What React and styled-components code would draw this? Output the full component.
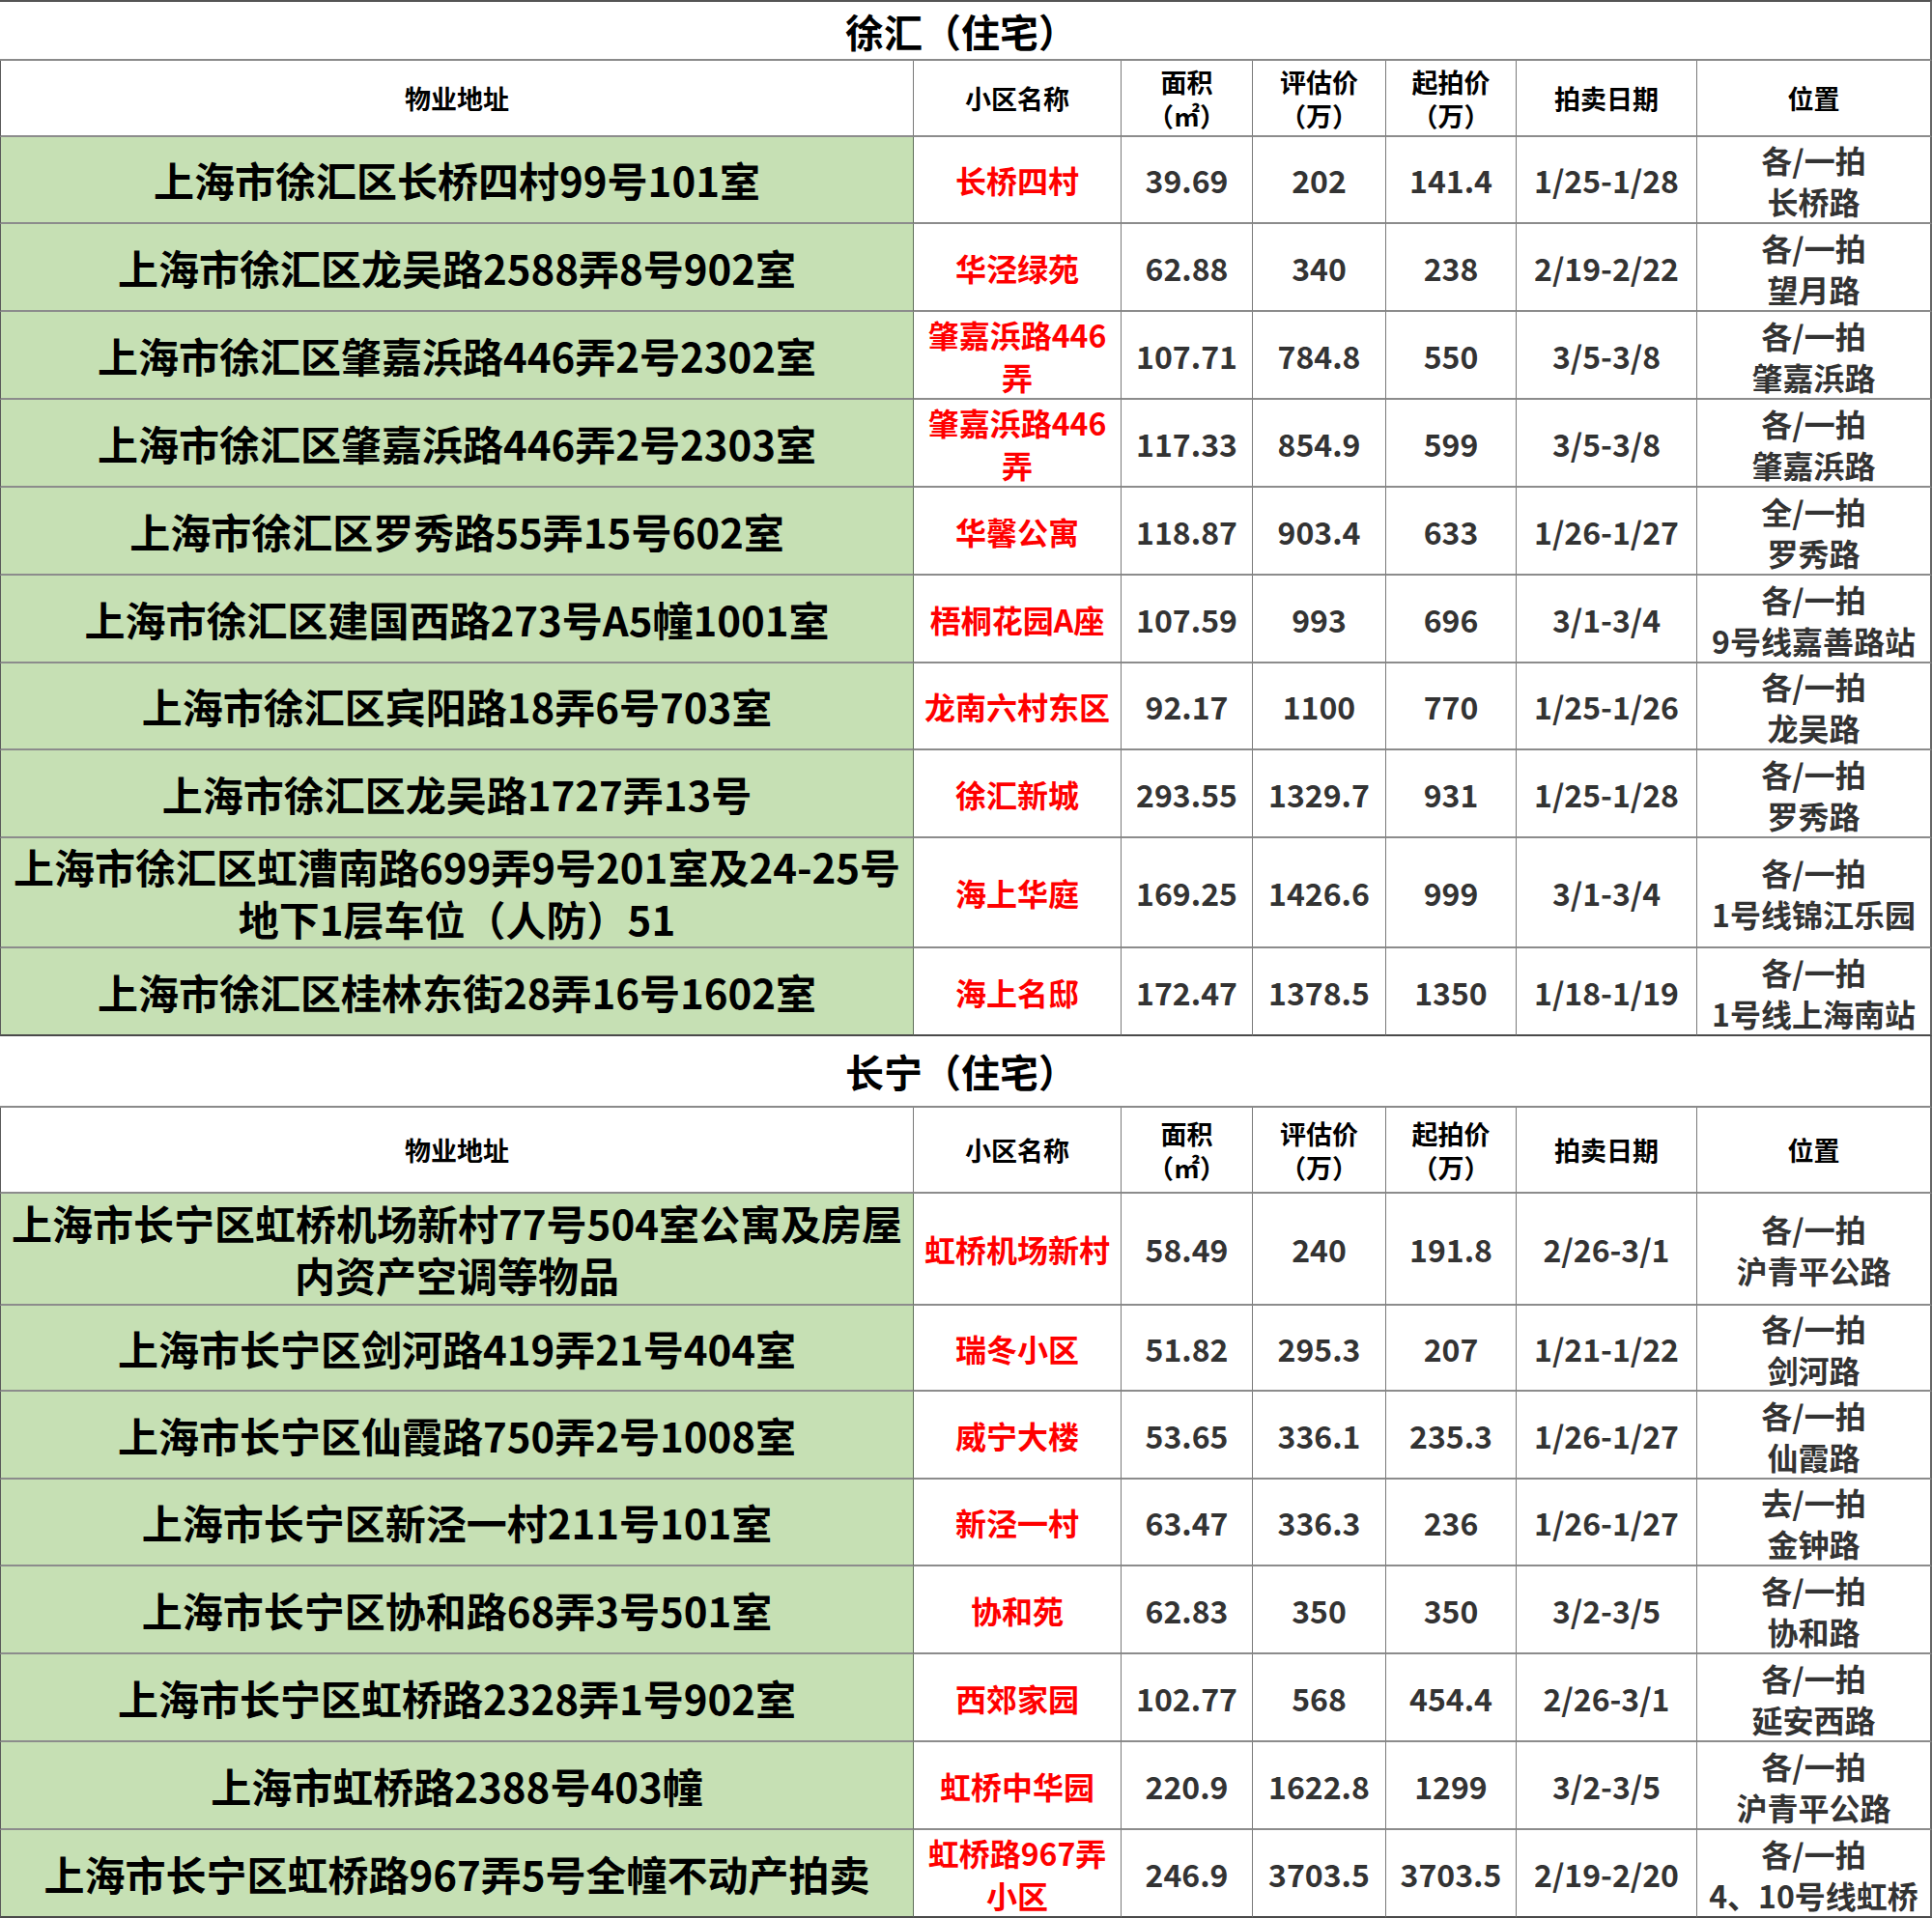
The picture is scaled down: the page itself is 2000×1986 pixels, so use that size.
import React from 'react';
import styled, { createGlobalStyle } from 'styled-components';

const GlobalStyle = createGlobalStyle`
  html, body { margin: 0; padding: 0; background: #ffffff; }
  body { font-family: "Noto Sans CJK SC", "Noto Sans", sans-serif; }
  * { box-sizing: border-box; }
`;

const COLS = '946px 215px 136px 138px 135px 187px 243px';

const Page = styled.div`
  width: 2000px;
  display: flex;
  flex-direction: column;
`;

const Section = styled.section`
  display: flex;
  flex-direction: column;
`;

const TitleBar = styled.div`
  height: ${(p) => p.$h}px;
  display: flex;
  align-items: center;
  justify-content: center;
  font-size: 40px;
  line-height: 48px;
  font-weight: 700;
  color: #000;
  background: #fff;
  border-top: ${(p) => (p.$top ? '2px solid #555' : 'none')};
  border-right: 2px solid #666;
  border-bottom: 2px solid #8a8a8a;
  padding-right: 8px;
`;

const Row = styled.div`
  display: grid;
  grid-template-columns: ${COLS};
  height: ${(p) => p.$h}px;
`;

const Cell = styled.div`
  display: flex;
  flex-direction: column;
  align-items: center;
  justify-content: center;
  text-align: center;
  white-space: nowrap;
  overflow: hidden;
  font-weight: 700;
  background: #fff;
  border-right: 1px solid #7a7a7a;
  border-bottom: 2px solid ${(p) => (p.$last ? '#4a4a4a' : '#8c8c8c')};
  &:first-child { border-left: 1px solid #5a5a5a; }
  &:last-child { border-right: 2px solid #666; }
`;

const HeaderCell = styled(Cell)`
  font-size: 27px;
  line-height: 35px;
  color: #000;
`;

const AddressCell = styled(Cell)`
  background: #c6e0b4;
  font-size: 42px;
  line-height: 54px;
  color: #000;
  border-right: 1px solid #5f6e5a;
`;

const NameCell = styled(Cell)`
  font-size: 32px;
  line-height: 44px;
  color: #ff0000;
`;

const NumCell = styled(Cell)`
  font-size: 32px;
  color: #333;
`;

const PosCell = styled(Cell)`
  font-size: 32px;
  line-height: 43px;
  color: #333;
  padding-top: 2px;
`;

const Line = styled.span`
  display: block;
`;

const Lines = ({ text }) =>
  text.split('|').map((t, i) => <Line key={i}>{t}</Line>);

const sections = [
  {
    title: '徐汇（住宅）',
    titleH: 63,
    headerH: 79,
    top: true,
    rows: [
      ['上海市徐汇区长桥四村99号101室', '长桥四村', '39.69', '202', '141.4', '1/25-1/28', '各/一拍|长桥路', 90],
      ['上海市徐汇区龙吴路2588弄8号902室', '华泾绿苑', '62.88', '340', '238', '2/19-2/22', '各/一拍|望月路', 91],
      ['上海市徐汇区肇嘉浜路446弄2号2302室', '肇嘉浜路446|弄', '107.71', '784.8', '550', '3/5-3/8', '各/一拍|肇嘉浜路', 91],
      ['上海市徐汇区肇嘉浜路446弄2号2303室', '肇嘉浜路446|弄', '117.33', '854.9', '599', '3/5-3/8', '各/一拍|肇嘉浜路', 91],
      ['上海市徐汇区罗秀路55弄15号602室', '华馨公寓', '118.87', '903.4', '633', '1/26-1/27', '全/一拍|罗秀路', 91],
      ['上海市徐汇区建国西路273号A5幢1001室', '梧桐花园A座', '107.59', '993', '696', '3/1-3/4', '各/一拍|9号线嘉善路站', 91],
      ['上海市徐汇区宾阳路18弄6号703室', '龙南六村东区', '92.17', '1100', '770', '1/25-1/26', '各/一拍|龙吴路', 90],
      ['上海市徐汇区龙吴路1727弄13号', '徐汇新城', '293.55', '1329.7', '931', '1/25-1/28', '各/一拍|罗秀路', 91],
      ['上海市徐汇区虹漕南路699弄9号201室及24-25号|地下1层车位（人防）51', '海上华庭', '169.25', '1426.6', '999', '3/1-3/4', '各/一拍|1号线锦江乐园', 114],
      ['上海市徐汇区桂林东街28弄16号1602室', '海上名邸', '172.47', '1378.5', '1350', '1/18-1/19', '各/一拍|1号线上海南站', 91],
    ],
  },
  {
    title: '长宁（住宅）',
    titleH: 74,
    headerH: 89,
    top: false,
    rows: [
      ['上海市长宁区虹桥机场新村77号504室公寓及房屋|内资产空调等物品', '虹桥机场新村', '58.49', '240', '191.8', '2/26-3/1', '各/一拍|沪青平公路', 116],
      ['上海市长宁区剑河路419弄21号404室', '瑞冬小区', '51.82', '295.3', '207', '1/21-1/22', '各/一拍|剑河路', 89],
      ['上海市长宁区仙霞路750弄2号1008室', '威宁大楼', '53.65', '336.1', '235.3', '1/26-1/27', '各/一拍|仙霞路', 91],
      ['上海市长宁区新泾一村211号101室', '新泾一村', '63.47', '336.3', '236', '1/26-1/27', '去/一拍|金钟路', 90],
      ['上海市长宁区协和路68弄3号501室', '协和苑', '62.83', '350', '350', '3/2-3/5', '各/一拍|协和路', 91],
      ['上海市长宁区虹桥路2328弄1号902室', '西郊家园', '102.77', '568', '454.4', '2/26-3/1', '各/一拍|延安西路', 91],
      ['上海市虹桥路2388号403幢', '虹桥中华园', '220.9', '1622.8', '1299', '3/2-3/5', '各/一拍|沪青平公路', 91],
      ['上海市长宁区虹桥路967弄5号全幢不动产拍卖', '虹桥路967弄|小区', '246.9', '3703.5', '3703.5', '2/19-2/20', '各/一拍|4、10号线虹桥', 91],
    ],
  },
];

const headers = ['物业地址', '小区名称', '面积|（㎡）', '评估价|（万）', '起拍价|（万）', '拍卖日期', '位置'];

function Table({ data }) {
  const n = data.rows.length;
  return (
    <Section>
      <TitleBar $h={data.titleH} $top={data.top}>{data.title}</TitleBar>
      <Row $h={data.headerH}>
        {headers.map((h) => (
          <HeaderCell key={h}>
            <Lines text={h} />
          </HeaderCell>
        ))}
      </Row>
      {data.rows.map((r, i) => {
        const last = i === n - 1;
        return (
          <Row key={i} $h={r[7]}>
            <AddressCell $last={last}><Lines text={r[0]} /></AddressCell>
            <NameCell $last={last}><Lines text={r[1]} /></NameCell>
            <NumCell $last={last}>{r[2]}</NumCell>
            <NumCell $last={last}>{r[3]}</NumCell>
            <NumCell $last={last}>{r[4]}</NumCell>
            <NumCell $last={last}>{r[5]}</NumCell>
            <PosCell $last={last}><Lines text={r[6]} /></PosCell>
          </Row>
        );
      })}
    </Section>
  );
}

export default function App() {
  return (
    <>
      <GlobalStyle />
      <Page>
        {sections.map((s) => (
          <Table key={s.title} data={s} />
        ))}
      </Page>
    </>
  );
}
